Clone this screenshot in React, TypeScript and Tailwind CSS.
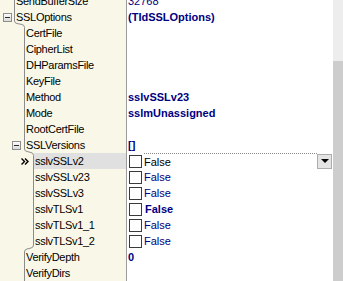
type Row = {
  name: string;
  level: 0 | 1 | 2;
  value?: string;
  bold?: boolean;
  toggle?: boolean;
  check?: boolean;
  selected?: boolean;
};

const rows: Row[] = [
  { name: "SendBufferSize", level: 0, value: "32768" },
  { name: "SSLOptions", level: 0, toggle: true, value: "(TIdSSLOptions)", bold: true },
  { name: "CertFile", level: 1 },
  { name: "CipherList", level: 1 },
  { name: "DHParamsFile", level: 1 },
  { name: "KeyFile", level: 1 },
  { name: "Method", level: 1, value: "sslvSSLv23", bold: true },
  { name: "Mode", level: 1, value: "sslmUnassigned", bold: true },
  { name: "RootCertFile", level: 1 },
  { name: "SSLVersions", level: 1, toggle: true, value: "[]", bold: true },
  { name: "sslvSSLv2", level: 2, check: true, value: "False", selected: true },
  { name: "sslvSSLv23", level: 2, check: true, value: "False" },
  { name: "sslvSSLv3", level: 2, check: true, value: "False" },
  { name: "sslvTLSv1", level: 2, check: true, value: "False", bold: true },
  { name: "sslvTLSv1_1", level: 2, check: true, value: "False" },
  { name: "sslvTLSv1_2", level: 2, check: true, value: "False" },
  { name: "VerifyDepth", level: 1, value: "0", bold: true },
  { name: "VerifyDirs", level: 1 },
];

// gutter width per nesting level, box offset inside it
const gutter = ["w-[15px]", "w-[25px]", "w-[34px]"];
const boxOffset = ["ml-[3px]", "ml-[12px]", "ml-[21px]"];

function MinusBox() {
  return (
    <svg width="9" height="9" viewBox="0 0 9 9">
      <defs>
        <linearGradient id="mb" x1="0" y1="0" x2="0" y2="1">
          <stop offset="0" stopColor="#ffffff" />
          <stop offset="1" stopColor="#d8d8d8" />
        </linearGradient>
      </defs>
      <rect x="0.5" y="0.5" width="8" height="8" fill="url(#mb)" stroke="#8e8e8e" />
      <path d="M2 4.5H7" stroke="#2a2a2a" />
    </svg>
  );
}

function Chevrons() {
  return (
    <svg width="8" height="7" viewBox="0 0 8 7">
      <path d="M0.5 0.5L3.5 3.5L0.5 6.5M4 0.5L7 3.5L4 6.5" fill="none" stroke="#000" strokeWidth="1.4" />
    </svg>
  );
}

function TreeLines() {
  return (
    <svg
      className="pointer-events-none absolute left-0 top-0"
      width="40"
      height="281"
      viewBox="0 0 40 281"
    >
      <path
        d="M14.5 0V21Q14.5 23 17 23.5L22 24.5Q24.5 25 24.5 27.5V149Q24.5 151 27 151.5L31 152.5Q33.5 153 33.5 155.5V245Q33.5 247.5 31 248L27 249Q24.5 249.5 24.5 252V281"
        fill="none"
        stroke="#8c8c8c"
      />
    </svg>
  );
}

function Value({ row }: { row: Row }) {
  const color = row.selected ? "text-black" : "text-[#000080]";
  const weight = row.bold ? "font-bold" : "font-normal";
  if (row.check) {
    return (
      <div className="flex h-4 items-center pl-[2px]">
        <span className="h-[13px] w-[13px] shrink-0 border border-[#3a3a3a] bg-white" />
        {row.selected ? (
          <div className="ml-[2px] flex h-4 flex-1 items-center">
            <div className="flex h-[16px] flex-1 items-center border-t border-dotted border-[#8a8a8a]">
              <span className={`${color} ${weight}`}>{row.value}</span>
            </div>
            <button
              type="button"
              className="mr-[1px] grid h-[15px] w-[15px] place-items-center border border-[#acacac] bg-[#e4e4e4]"
            >
              <span className="h-0 w-0 border-x-[4px] border-t-[4px] border-x-transparent border-t-black" />
            </button>
          </div>
        ) : (
          <span className={`ml-[2px] ${color} ${weight} ${row.bold ? "pl-[1px]" : ""}`}>{row.value}</span>
        )}
      </div>
    );
  }
  return (
    <div className="flex h-4 items-center pl-[1px]">
      <span className={`${color} ${weight}`}>{row.value}</span>
    </div>
  );
}

export default function App() {
  return (
    <div
      className="flex h-[281px] w-[343px] overflow-hidden bg-white text-[11px] leading-4"
      style={{ fontFamily: '"Liberation Sans", Arial, sans-serif' }}
    >
      <div className="relative w-[333px]">
        <div className="mt-[-7px] flex flex-col">
          {rows.map((row) => (
            <div key={row.name} className="flex h-4">
              <div className="flex w-[126px] bg-[#f9f7e8]">
                <div className={`${gutter[row.level]} flex shrink-0 items-center`}>
                  {row.toggle && (
                    <span className={`${boxOffset[row.level]} flex`}>
                      <MinusBox />
                    </span>
                  )}
                  {row.selected && (
                    <span className={`${boxOffset[row.level]} flex`}>
                      <Chevrons />
                    </span>
                  )}
                </div>
                <div
                  className={`flex flex-1 items-center pl-[1px] tracking-[-0.3px] text-black ${
                    row.selected ? "bg-[#e0e0e0]" : ""
                  }`}
                >
                  {row.name}
                </div>
              </div>
              <div className="flex-1 border-l border-[#9c9c9c] bg-white">
                {row.value && <Value row={row} />}
              </div>
            </div>
          ))}
        </div>
        <TreeLines />
      </div>
      <div className="flex w-[10px] flex-col">
        <div className="h-[61px] bg-[#ededed]" />
        <div className="flex-1 bg-[#cdcdcd]" />
      </div>
    </div>
  );
}
